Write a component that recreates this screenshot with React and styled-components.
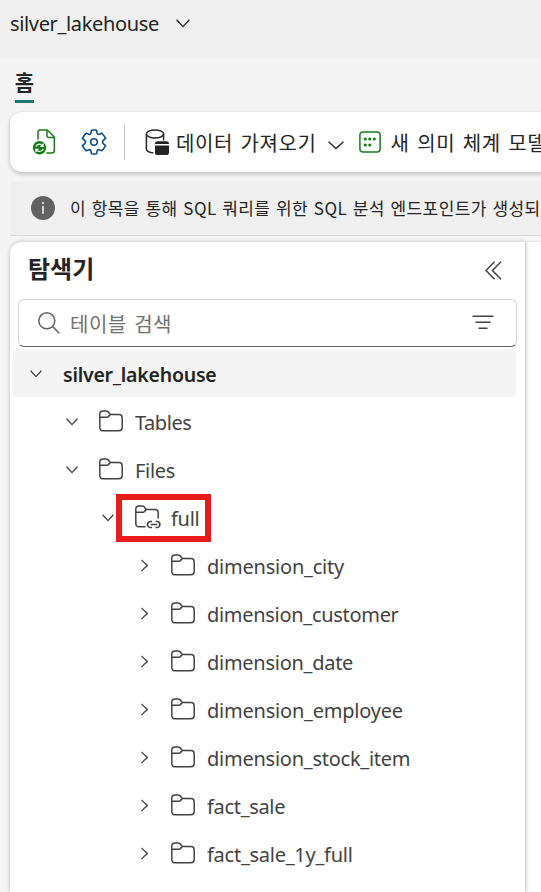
import React from "react";
import styled, { createGlobalStyle } from "styled-components";

const Global = createGlobalStyle`
  * { box-sizing: border-box; }
  html, body { margin: 0; overflow: hidden; background: #f4f4f4; }
  body { font-family: "Noto Sans", "Noto Sans CJK KR", sans-serif; color: #242424; }
  svg { display: block; flex: none; fill: none; stroke: currentColor; }
`;

const Page = styled.div`
  width: 541px;
  height: 892px;
  overflow: hidden;
  display: flex;
  flex-direction: column;
  background: #f4f4f4;
`;

const Text = styled.span`
  white-space: pre;
  flex: none;
  line-height: 1;
  font-size: ${(p) => p.$size || 20}px;
  font-weight: ${(p) => p.$weight || 400};
  letter-spacing: ${(p) => p.$track || 0}px;
  word-spacing: ${(p) => p.$words || 0}px;
  padding-top: ${(p) => p.$drop || 0}px;
  color: ${(p) => p.$color || "#242424"};
  font-family: ${(p) => (p.$korean ? '"Noto Sans CJK KR", sans-serif' : '"Noto Sans", sans-serif')};
`;

const TitleBar = styled.header`
  flex: none;
  height: 58px;
  padding: 0 0 11px 10px;
  display: flex;
  align-items: center;
  gap: 17px;
  background: #efefef;
`;

const Tabs = styled.nav`
  flex: none;
  height: 54px;
  padding-left: 15px;
  display: flex;
  align-items: flex-start;
`;

const Tab = styled.div`
  width: 19px;
  height: 45px;
  padding-top: 13px;
  display: flex;
  justify-content: center;
  border-bottom: 3px solid #217868;
`;

const Toolbar = styled.div`
  flex: none;
  height: 60px;
  margin: 0 -20px 0 10px;
  padding-left: 22px;
  display: flex;
  align-items: center;
  border-radius: 12px;
  background: #fff;
  box-shadow: 0 2px 5px rgba(0, 0, 0, 0.2), 0 0 2px rgba(0, 0, 0, 0.1);
`;

const ToolButton = styled.div`
  flex: none;
  display: flex;
  align-items: center;
  gap: ${(p) => p.$gap || 0}px;
  margin-right: ${(p) => p.$after || 0}px;
`;

const MenuArrow = styled.div`
  padding: 6px 0 0 4px;
`;

const Separator = styled.div`
  width: 1px;
  height: 36px;
  margin-right: 20px;
  background: #c8c8c8;
`;

const InfoBar = styled.div`
  flex: none;
  height: 55px;
  margin: 9px 0 6px 10px;
  padding-left: 21px;
  display: flex;
  align-items: center;
  gap: 15px;
  overflow: hidden;
  background: #efefef;
  border-bottom: 1px solid #dadada;
`;

const InfoMessage = styled(Text)`
  padding-bottom: 2px;
`;

const InfoBadge = styled.svg`
  width: 24px;
  height: 24px;
`;

const Workspace = styled.main`
  flex: 1;
  display: flex;
  gap: 1px;
  padding-left: 10px;
`;

const Explorer = styled.section`
  position: relative;
  flex: none;
  width: 515px;
  border-radius: 12px 0 0 0;
  background: #fff;
  box-shadow: 0 0 4px rgba(0, 0, 0, 0.24);
`;

const Content = styled.section`
  flex: 1;
  background: linear-gradient(90deg, #f3f3f3, #fff 3px);
  box-shadow: 0 0 2px rgba(0, 0, 0, 0.15);
`;

const ExplorerHead = styled.div`
  height: 57px;
  padding: 0 23px 1px 18px;
  display: flex;
  align-items: center;
  justify-content: space-between;
`;

const Heading = styled(Text)`
  padding-bottom: 5px;
`;

const SearchBox = styled.div`
  height: 48px;
  margin: 0 8px 2px;
  padding: 0 22px 0 19px;
  display: flex;
  align-items: center;
  gap: 10px;
  border: 1px solid #d1d1d1;
  border-bottom-color: #616161;
  border-radius: 6px;
  color: #616161;
  & > :last-child { margin: 0 0 1px auto; color: #424242; }
`;

const Row = styled.div`
  position: relative;
  height: 48px;
  margin: 0 9px 0 2px;
  padding-left: ${(p) => 6 + p.$level * 36}px;
  display: flex;
  align-items: center;
  border-radius: 6px;
  background: ${(p) => (p.$selected ? "#f4f4f4" : "transparent")};
  color: #424242;
`;

const Toggle = styled.div`
  width: 36px;
  margin-right: 9px;
  padding-top: ${(p) => (p.$open ? 2 : 0)}px;
  display: flex;
  justify-content: center;
`;

const FolderSlot = styled.div`
  width: 36px;
`;

const Highlight = styled.div`
  position: absolute;
  left: 104px;
  top: 1px;
  width: 95px;
  height: 48px;
  border: 6px solid #e81b1b;
`;

const ChevronDown = ({ w = 12, h = 8, sw = 1.3 }) => (
  <svg width={w} height={h} viewBox={`0 0 ${w} ${h}`} strokeWidth={sw}>
    <path d={`M.6 .7L${w / 2} ${h - 1.4}L${w - 0.6} .7`} />
  </svg>
);

const ChevronRight = () => (
  <svg width="8" height="13" viewBox="0 0 8 13" strokeWidth="1.3">
    <path d="M1.4 .9L7.2 6.5L1.4 12.1" />
  </svg>
);

const Folder = () => (
  <svg width="24" height="22" viewBox="0 0 24 22" strokeWidth="1.5">
    <path d="M.8 4.3Q.8 1 4 1H7.2Q8.6 1 9.4 2L11.3 4.6H20Q23.2 4.6 23.2 7.8V17.6Q23.2 20.8 20 20.8H4Q.8 20.8 .8 17.6Z" />
    <path d="M.8 7.3H7.2Q8.6 7.3 9.4 6.6L11.3 4.6" />
  </svg>
);

const LinkedFolder = () => (
  <svg width="26" height="24" viewBox="0 0 26 24" strokeWidth="1.5">
    <path d="M10.5 21.8H4Q.8 21.8 .8 18.6V4.3Q.8 1 4 1H7.2Q8.6 1 9.4 2L11.3 4.6H20Q23.2 4.6 23.2 7.8V13.5" />
    <path d="M.8 7.3H7.2Q8.6 7.3 9.4 6.6L11.3 4.6" />
    <path d="M17 16.6H15.6A3 3 0 0 0 15.6 22.6H17M20.6 16.6H21.9A3 3 0 0 1 21.9 22.6H20.6M15.6 19.6H22" />
  </svg>
);

const RefreshFile = () => (
  <svg width="24" height="26" viewBox="0 0 24 26" strokeWidth="1.5" color="#1a7a1a">
    <path d="M6 10.5V3.2Q6 1 8.2 1H15.3L22.3 8V21.5Q22.3 24 19.8 24H14.3" />
    <path d="M15 1V6.4Q15 8.4 17 8.4H22.3" />
    <circle cx="7.5" cy="18.8" r="6.7" fill="#1a7a1a" stroke="none" />
    <path stroke="#fff" strokeWidth="1.2" d="M3.8 17.6Q5 14.9 7.7 15.1Q9.6 15.3 10.8 17M11.1 14.4V17.3H8.4M11.3 19.9Q10 22.6 7.3 22.5Q5.4 22.3 4.2 20.6M3.9 23.2V20.3H6.6" />
  </svg>
);

const Gear = () => (
  <svg width="26" height="26" viewBox="0 0 26 26" strokeWidth="1.6" strokeLinejoin="round" color="#0f4c84">
    <path d="M10.4 1.3Q13 .6 15.6 1.3L16.1 4.2Q16.5 5.6 18 5.3L20.9 4.3Q22.8 6.2 24.6 9.3L22.2 11.4Q20.8 13 22.2 14.6L24.6 16.7Q22.9 19.8 20.9 21.7L18 20.7Q16.5 20.4 16.1 21.8L15.6 24.7Q13 25.4 10.4 24.7L9.9 21.8Q9.5 20.4 8 20.7L5.1 21.7Q3.2 19.8 1.4 16.7L3.8 14.6Q5.2 13 3.8 11.4L1.4 9.3Q3.1 6.2 5.1 4.3L8 5.3Q9.5 5.6 9.9 4.2Z" />
    <circle cx="13" cy="13" r="3.3" />
  </svg>
);

const DataStore = () => (
  <svg width="24" height="27" viewBox="0 0 24 27" strokeWidth="1.5">
    <ellipse cx="10" cy="5" rx="8.6" ry="4" />
    <path d="M1.4 5V20Q1.4 23 8.3 24M18.6 5V11.5" />
    <path fill="currentColor" stroke="none" d="M10 15V14.8Q10 12.2 12.6 12.2H21.4Q24 12.2 24 14.8V15ZM10 16.5H24V23.4Q24 26 21.4 26H12.6Q10 26 10 23.4Z" />
  </svg>
);

const Model = () => (
  <svg width="22" height="22" viewBox="0 0 22 22" strokeWidth="1.5" color="#1a7a1a">
    <rect x=".9" y=".9" width="20.2" height="20.2" rx="3" />
    <g fill="currentColor" stroke="none">
      {[[6.3, 8], [10.8, 8], [15.3, 8], [6.3, 14], [10.8, 14]].map(([x, y]) => (
        <circle key={`${x}-${y}`} cx={x} cy={y} r="1.6" />
      ))}
    </g>
  </svg>
);

const Info = () => (
  <InfoBadge viewBox="0 0 24 24">
    <circle cx="12" cy="12" r="12" fill="#616161" stroke="none" />
    <path stroke="#efefef" strokeWidth="1.6" d="M12 10V17.8" />
    <circle cx="12" cy="7" r="1.1" fill="#efefef" stroke="none" />
  </InfoBadge>
);

const tree = [
  { name: "Tables", level: 1, open: true, track: -0.45 },
  { name: "Files", level: 1, open: true, track: -0.3 },
  { name: "full", level: 2, open: true, linked: true, track: -0.3 },
  { name: "dimension_city", level: 3, track: -0.22 },
  { name: "dimension_customer", level: 3, track: -0.3 },
  { name: "dimension_date", level: 3, track: -0.27 },
  { name: "dimension_employee", level: 3, track: -0.22 },
  { name: "dimension_stock_item", level: 3, track: -0.25 },
  { name: "fact_sale", level: 3, track: -0.32 },
  { name: "fact_sale_1y_full", level: 3, track: -0.26 },
];

export default function App() {
  return (
    <Page>
      <Global />
      <TitleBar>
        <Text $track={-0.35}>silver_lakehouse</Text>
        <ChevronDown w={14} h={9} />
      </TitleBar>
      <Tabs>
        <Tab><Text $korean $size={21} $weight={700}>홈</Text></Tab>
      </Tabs>
      <Toolbar>
        <ToolButton $after={25}><RefreshFile /></ToolButton>
        <ToolButton $after={17}><Gear /></ToolButton>
        <Separator />
        <ToolButton $gap={7} $after={15}>
          <DataStore />
          <Text $korean $track={0.6} $words={2.5} $drop={2}>데이터 가져오기</Text>
          <MenuArrow><ChevronDown w={16} h={9} /></MenuArrow>
        </ToolButton>
        <ToolButton $gap={10}>
          <Model />
          <Text $korean $track={0.6} $words={2.5} $drop={2}>새 의미 체계 모델</Text>
        </ToolButton>
      </Toolbar>
      <InfoBar>
        <Info />
        <InfoMessage $korean $size={17} $track={0.4} $words={1.5}>
          이 항목을 통해 SQL 쿼리를 위한 SQL 분석 엔드포인트가 생성되
        </InfoMessage>
      </InfoBar>
      <Workspace>
        <Explorer>
          <ExplorerHead>
            <Heading $korean $size={24} $weight={700}>탐색기</Heading>
            <svg width="17" height="19" viewBox="0 0 17 19" strokeWidth="1.5" color="#424242">
              <path d="M9.5 .7L1 9.5L9.5 18.3M16 .7L7.5 9.5L16 18.3" />
            </svg>
          </ExplorerHead>
          <SearchBox>
            <svg width="22" height="22" viewBox="0 0 22 22" strokeWidth="1.5">
              <circle cx="8.8" cy="8.8" r="8" />
              <path d="M14.5 14.5L21.3 21.3" />
            </svg>
            <Text $korean $track={0.5} $words={2.5} $drop={2} $color="#707070">테이블 검색</Text>
            <svg width="22" height="15" viewBox="0 0 22 15" strokeWidth="1.5">
              <path d="M.5 1.2H21.5M3.5 7.2H18.5M6.5 13.2H15.5" />
            </svg>
          </SearchBox>
          <Row $level={0} $selected>
            <Toggle $open><ChevronDown /></Toggle>
            <Text $size={19.5} $weight={600} $track={-0.23} $drop={3}>silver_lakehouse</Text>
          </Row>
          {tree.map((item) => (
            <Row key={item.name} $level={item.level}>
              <Toggle $open={item.open}>{item.open ? <ChevronDown /> : <ChevronRight />}</Toggle>
              <FolderSlot>{item.linked ? <LinkedFolder /> : <Folder />}</FolderSlot>
              <Text $track={item.track} $drop={3} $color="#424242">{item.name}</Text>
              {item.linked && <Highlight />}
            </Row>
          ))}
        </Explorer>
        <Content />
      </Workspace>
    </Page>
  );
}
